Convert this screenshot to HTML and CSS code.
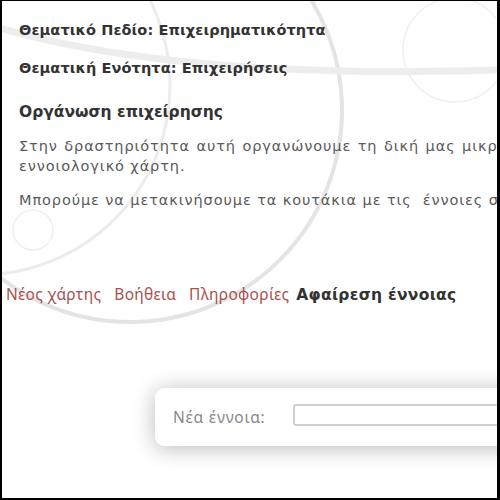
FILE: index.html
```html
<!DOCTYPE html>
<html lang="el">
<head>
<meta charset="utf-8">
<title>Οργάνωση επιχείρησης</title>
<link rel="stylesheet" href="styles.css">
</head>
<body>
<div class="frame">
  <svg class="deco" width="500" height="500" viewBox="0 0 500 500" aria-hidden="true">
    <circle cx="130" cy="110" r="212" fill="none" stroke="#e4e4e4" stroke-width="4"/>
    <circle cx="-20" cy="85" r="190" fill="none" stroke="#ececec" stroke-width="3"/>
    <path d="M-10,25 Q170,80 500,70" fill="none" stroke="#ededed" stroke-width="7"/>
    <circle cx="455" cy="50" r="52" fill="none" stroke="#efefef" stroke-width="1.5"/>
    <circle cx="33" cy="230" r="20" fill="none" stroke="#efefef" stroke-width="1.5"/>
  </svg>
  <div class="content">
    <div class="t1">Θεματικό Πεδίο: Επιχειρηματικότητα</div>
    <div class="t2">Θεματική Ενότητα: Επιχειρήσεις</div>
    <div class="t3">Οργάνωση επιχείρησης</div>
    <p class="p1"><span class="line">Στην δραστηριότητα αυτή οργανώνουμε τη δική μας μικρή επιχείρηση φτιάχνοντας τον</span><span class="line">εννοιολογικό χάρτη.</span></p>
    <p class="p2">Μπορούμε να μετακινήσουμε τα κουτάκια με τις&nbsp; έννοιες σε όποια θέση θέλουμε.</p>
  </div>
  <div class="menu">
    <a class="link">Νέος χάρτης</a>
    <a class="link">Βοήθεια</a>
    <a class="link">Πληροφορίες</a>
    <span class="remove">Αφαίρεση έννοιας</span>
  </div>
  <div class="box">
    <label class="label">Νέα έννοια:</label>
    <div class="input"></div>
  </div>
</div>
</body>
</html>
```
FILE: styles.css
```css
html, body {
  margin: 0;
  padding: 0;
  background: #fff;
}
.frame {
  position: relative;
  width: 500px;
  height: 500px;
  box-sizing: border-box;
  border-left: 2px solid #000;
  border-top: 1px solid #000;
  border-right: 3px solid #000;
  border-bottom: 2px solid #000;
  overflow: hidden;
  background: #fff;
}
.deco {
  position: absolute;
  left: -2px;
  top: -1px;
  z-index: 0;
}
.content, .menu, .box {
  position: relative;
  z-index: 1;
}
.content {
  padding: 19px 0 0 17px;
  width: 900px;
  font-family: "DejaVu Sans", Verdana, sans-serif;
}
.t1, .t2 {
  font-size: 14.5px;
  font-weight: bold;
  letter-spacing: 0.1px;
  line-height: 20px;
  color: #333;
}
.t2 {
  margin-top: 18px;
}
.t3 {
  margin-top: 24px;
  font-size: 15.5px;
  font-weight: bold;
  line-height: 20px;
  color: #333;
}
.p1, .p2 {
  margin: 14px 0 0;
  font-size: 14.5px;
  letter-spacing: 0.9px;
  line-height: 20px;
  color: #5a5a5a;
  white-space: nowrap;
}
.line {
  display: block;
}
.line:first-child {
  word-spacing: 1px;
}
.menu {
  margin-top: 74px;
  padding-left: 4px;
  display: flex;
  align-items: baseline;
  line-height: 20px;
  white-space: nowrap;
}
.link {
  font-family: "Noto Sans", sans-serif;
  font-size: 15.5px;
  letter-spacing: 0.3px;
  color: #a9514f;
  margin-right: 13px;
}
.link:nth-child(3) {
  margin-right: 7px;
}
.remove {
  font-family: "DejaVu Sans", Verdana, sans-serif;
  font-weight: bold;
  font-size: 15.5px;
  letter-spacing: 0.3px;
  color: #333;
}
.box {
  margin: 83px 0 0 153px;
  width: 400px;
  height: 58px;
  box-sizing: border-box;
  border-radius: 9px;
  background: #fff;
  box-shadow: 0 2px 22px rgba(0, 0, 0, 0.28);
  display: flex;
  align-items: center;
  padding-left: 18px;
}
.label {
  font-family: "Noto Sans", sans-serif;
  font-size: 15.5px;
  letter-spacing: 0.8px;
  color: #888;
  width: 120px;
}
.input {
  width: 260px;
  height: 22px;
  margin-bottom: 4px;
  box-sizing: border-box;
  border: 2px solid #cfcfcf;
  border-radius: 3px;
  background: #fff;
}
```
